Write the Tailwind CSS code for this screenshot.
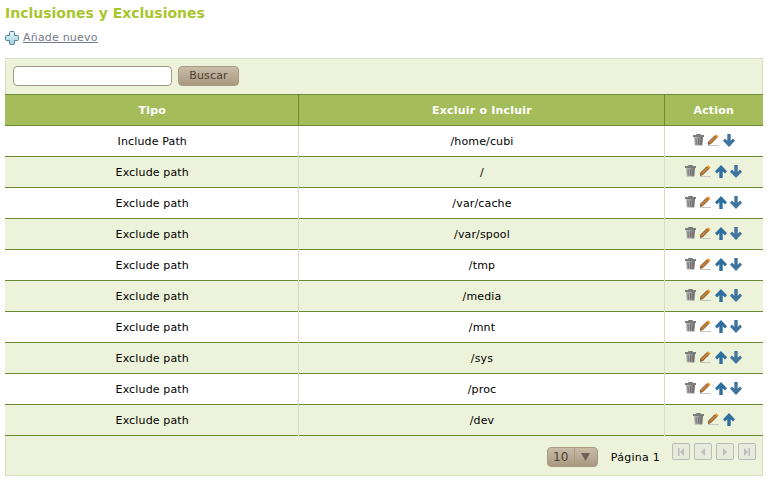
<!DOCTYPE html>
<html lang="en">
<head>
  <meta charset="UTF-8" />
  <title>Inclusiones y Exclusiones</title>
  <script src="https://cdn.jsdelivr.net/npm/@tailwindcss/browser@4"></script>
</head>
<body class="bg-white font-['DejaVu_Sans',sans-serif] text-[11px] tracking-[0.15px] text-black">
  <!-- Icon set -->
  <svg class="absolute w-0 h-0">
    <defs>
      <linearGradient id="can" x1="0" x2="1" y1="0" y2="0">
        <stop offset="0" stop-color="#b8b8b8"/>
        <stop offset=".5" stop-color="#9a9a9a"/>
        <stop offset="1" stop-color="#6c6c6c"/>
      </linearGradient>
      <linearGradient id="cross" x1="0" x2="0" y1="0" y2="1">
        <stop offset="0" stop-color="#e4f5f8"/>
        <stop offset="1" stop-color="#9fd0de"/>
      </linearGradient>
    </defs>
    <symbol id="trash" viewBox="0 0 11 12">
      <path d="M3.500 1V.5h4V1" fill="none" stroke="#777"/>
      <path d="M0 1h11v2H0z" fill="#7c7c7c"/>
      <path d="M1 3h9l-.7 8.500H1.700z" fill="url(#can)"/>
      <path d="M3 4.500l.3 6M5.500 4.500v6M8 4.500l-.3 6" stroke="#666" stroke-width=".8"/>
    </symbol>
    <symbol id="pencil" viewBox="0 0 11 12">
      <path d="M.8 7.700L6.800 1.700l2 2-6 6-2.600.7z" fill="#c47f38" stroke="#6b4320" stroke-width=".8"/>
      <path d="M7 1.500L8.300.2l2.300 2.300-1.300 1.300z" fill="#f8941a"/>
      <path d="M0 11.500h11" stroke="#c4c4c0"/>
    </symbol>
    <symbol id="up" viewBox="0 0 12 13">
      <path d="M6 0l6 6.200-2 2.400-2.300-2.300V13H4.300V6.300L2 8.600 0 6.200z" fill="#2f6f9f"/>
    </symbol>
    <symbol id="down" viewBox="0 0 12 13">
      <path d="M6 13L0 6.800l2-2.400 2.300 2.300V0h3.400v6.700L10 4.400l2 2.400z" fill="#3f749f"/>
    </symbol>
    <symbol id="plus" viewBox="0 0 14 14">
      <path d="M5.500 .5h3a1 1 0 0 1 1 1v3h3a1 1 0 0 1 1 1v3a1 1 0 0 1-1 1h-3v3a1 1 0 0 1-1 1h-3a1 1 0 0 1-1-1v-3h-3a1 1 0 0 1-1-1v-3a1 1 0 0 1 1-1h3v-3a1 1 0 0 1 1-1z" fill="url(#cross)" stroke="#4f8296"/>
    </symbol>
  </svg>

  <div class="pl-[5px] pr-[4px] pt-[4px]">
    <h1 class="text-[14px] leading-[18px] font-bold tracking-normal text-[#a9c52f]">Inclusiones y Exclusiones</h1>

    <div class="flex items-center gap-[4px] mt-[8px] h-[16px]">
      <svg class="w-[14px] h-[14px]"><use href="#plus"/></svg>
      <a href="#" class="underline tracking-[0.2px] text-[#777a8a]">Añade nuevo</a>
    </div>

    <!-- Panel -->
    <div class="mt-[12px] border border-[#d8dfbd] bg-[#edf3da]">
      <div class="flex items-start gap-[6px] h-[35px] pl-[7px] pt-[7px]">
        <input type="text" class="w-[159px] h-[20px] bg-white border border-[#a89a80] rounded-[4px]" />
        <button class="w-[61px] h-[20px] rounded-[4px] border border-[#a89a80] bg-gradient-to-b from-[#c9bda8] to-[#a89880] text-[#4a3f30]">Buscar</button>
      </div>

      <table class="w-[calc(100%+2px)] -mx-[1px] table-fixed border-collapse">
        <colgroup>
          <col class="w-[293px]" />
          <col class="w-[366px]" />
          <col />
        </colgroup>
        <thead>
          <tr class="h-[31px] bg-[#a5bc5b] text-white font-bold tracking-[0.2px] text-center border-y border-[#6a8a35]">
            <th class="pt-[2px] pl-[2px] border-r border-[#6a8a35]">Tipo</th>
            <th class="pt-[2px] pl-[2px] border-r border-[#6a8a35]">Excluir o Incluir</th>
            <th class="pt-[2px]">Action</th>
          </tr>
        </thead>
        <tbody class="text-center">
          <tr class="h-[31px] bg-white border-b border-[#6a8a35]">
            <td class="pt-[2px] pl-[2px] border-r border-[#d8dfbd]">Include Path</td>
            <td class="pt-[2px] pl-[2px] border-r border-[#d8dfbd]">/home/cubi</td>
            <td class="pb-[2px]"><div class="flex justify-center items-center gap-[3px]"><svg class="w-[11px] h-[12px]"><use href="#trash"/></svg><svg class="mx-[1px] w-[11px] h-[12px]"><use href="#pencil"/></svg><svg class="w-[12px] h-[13px]"><use href="#down"/></svg></div></td>
          </tr>
          <tr class="h-[31px] bg-[#edf3da] border-b border-[#6a8a35]">
            <td class="pt-[2px] pl-[2px] border-r border-[#d8dfbd]">Exclude path</td>
            <td class="pt-[2px] pl-[2px] border-r border-[#d8dfbd]">/</td>
            <td class="pb-[2px]"><div class="flex justify-center items-center gap-[3px]"><svg class="w-[11px] h-[12px]"><use href="#trash"/></svg><svg class="mx-[1px] w-[11px] h-[12px]"><use href="#pencil"/></svg><svg class="w-[12px] h-[13px]"><use href="#up"/></svg><svg class="w-[12px] h-[13px]"><use href="#down"/></svg></div></td>
          </tr>
          <tr class="h-[31px] bg-white border-b border-[#6a8a35]">
            <td class="pt-[2px] pl-[2px] border-r border-[#d8dfbd]">Exclude path</td>
            <td class="pt-[2px] pl-[2px] border-r border-[#d8dfbd]">/var/cache</td>
            <td class="pb-[2px]"><div class="flex justify-center items-center gap-[3px]"><svg class="w-[11px] h-[12px]"><use href="#trash"/></svg><svg class="mx-[1px] w-[11px] h-[12px]"><use href="#pencil"/></svg><svg class="w-[12px] h-[13px]"><use href="#up"/></svg><svg class="w-[12px] h-[13px]"><use href="#down"/></svg></div></td>
          </tr>
          <tr class="h-[31px] bg-[#edf3da] border-b border-[#6a8a35]">
            <td class="pt-[2px] pl-[2px] border-r border-[#d8dfbd]">Exclude path</td>
            <td class="pt-[2px] pl-[2px] border-r border-[#d8dfbd]">/var/spool</td>
            <td class="pb-[2px]"><div class="flex justify-center items-center gap-[3px]"><svg class="w-[11px] h-[12px]"><use href="#trash"/></svg><svg class="mx-[1px] w-[11px] h-[12px]"><use href="#pencil"/></svg><svg class="w-[12px] h-[13px]"><use href="#up"/></svg><svg class="w-[12px] h-[13px]"><use href="#down"/></svg></div></td>
          </tr>
          <tr class="h-[31px] bg-white border-b border-[#6a8a35]">
            <td class="pt-[2px] pl-[2px] border-r border-[#d8dfbd]">Exclude path</td>
            <td class="pt-[2px] pl-[2px] border-r border-[#d8dfbd]">/tmp</td>
            <td class="pb-[2px]"><div class="flex justify-center items-center gap-[3px]"><svg class="w-[11px] h-[12px]"><use href="#trash"/></svg><svg class="mx-[1px] w-[11px] h-[12px]"><use href="#pencil"/></svg><svg class="w-[12px] h-[13px]"><use href="#up"/></svg><svg class="w-[12px] h-[13px]"><use href="#down"/></svg></div></td>
          </tr>
          <tr class="h-[31px] bg-[#edf3da] border-b border-[#6a8a35]">
            <td class="pt-[2px] pl-[2px] border-r border-[#d8dfbd]">Exclude path</td>
            <td class="pt-[2px] pl-[2px] border-r border-[#d8dfbd]">/media</td>
            <td class="pb-[2px]"><div class="flex justify-center items-center gap-[3px]"><svg class="w-[11px] h-[12px]"><use href="#trash"/></svg><svg class="mx-[1px] w-[11px] h-[12px]"><use href="#pencil"/></svg><svg class="w-[12px] h-[13px]"><use href="#up"/></svg><svg class="w-[12px] h-[13px]"><use href="#down"/></svg></div></td>
          </tr>
          <tr class="h-[31px] bg-white border-b border-[#6a8a35]">
            <td class="pt-[2px] pl-[2px] border-r border-[#d8dfbd]">Exclude path</td>
            <td class="pt-[2px] pl-[2px] border-r border-[#d8dfbd]">/mnt</td>
            <td class="pb-[2px]"><div class="flex justify-center items-center gap-[3px]"><svg class="w-[11px] h-[12px]"><use href="#trash"/></svg><svg class="mx-[1px] w-[11px] h-[12px]"><use href="#pencil"/></svg><svg class="w-[12px] h-[13px]"><use href="#up"/></svg><svg class="w-[12px] h-[13px]"><use href="#down"/></svg></div></td>
          </tr>
          <tr class="h-[31px] bg-[#edf3da] border-b border-[#6a8a35]">
            <td class="pt-[2px] pl-[2px] border-r border-[#d8dfbd]">Exclude path</td>
            <td class="pt-[2px] pl-[2px] border-r border-[#d8dfbd]">/sys</td>
            <td class="pb-[2px]"><div class="flex justify-center items-center gap-[3px]"><svg class="w-[11px] h-[12px]"><use href="#trash"/></svg><svg class="mx-[1px] w-[11px] h-[12px]"><use href="#pencil"/></svg><svg class="w-[12px] h-[13px]"><use href="#up"/></svg><svg class="w-[12px] h-[13px]"><use href="#down"/></svg></div></td>
          </tr>
          <tr class="h-[31px] bg-white border-b border-[#6a8a35]">
            <td class="pt-[2px] pl-[2px] border-r border-[#d8dfbd]">Exclude path</td>
            <td class="pt-[2px] pl-[2px] border-r border-[#d8dfbd]">/proc</td>
            <td class="pb-[2px]"><div class="flex justify-center items-center gap-[3px]"><svg class="w-[11px] h-[12px]"><use href="#trash"/></svg><svg class="mx-[1px] w-[11px] h-[12px]"><use href="#pencil"/></svg><svg class="w-[12px] h-[13px]"><use href="#up"/></svg><svg class="w-[12px] h-[13px]"><use href="#down"/></svg></div></td>
          </tr>
          <tr class="h-[31px] bg-[#edf3da] border-b border-[#6a8a35]">
            <td class="pt-[2px] pl-[2px] border-r border-[#d8dfbd]">Exclude path</td>
            <td class="pt-[2px] pl-[2px] border-r border-[#d8dfbd]">/dev</td>
            <td class="pb-[2px]"><div class="flex justify-center items-center gap-[3px]"><svg class="w-[11px] h-[12px]"><use href="#trash"/></svg><svg class="mx-[1px] w-[11px] h-[12px]"><use href="#pencil"/></svg><svg class="w-[12px] h-[13px]"><use href="#up"/></svg></div></td>
          </tr>
        </tbody>
      </table>

      <!-- Pagination -->
      <div class="flex items-start justify-end h-[39px] pr-[6px]">
        <div class="flex mt-[11px] w-[51px] h-[20px] rounded-[4px] border border-[#a89a80] bg-gradient-to-b from-[#c9bda8] to-[#a89880] text-[#4a3f30]">
          <span class="flex-1 text-center text-[12px] leading-[18px] border-r border-[#a89a80]">10</span>
          <span class="w-[22px] flex items-center justify-center"><svg class="w-[9px] h-[8px]" viewBox="0 0 9 8"><path d="M0 0h9L4.500 8z" fill="#6b6255"/></svg></span>
        </div>
        <span class="mt-[14px] ml-[13px] mr-[12px] tracking-[0.25px]">Página 1</span>
        <div class="flex gap-[4px] mt-[7px]">
          <span class="flex items-center justify-center w-[18px] h-[17px] rounded-[2px] border border-[#bbb] bg-[#e8ebdc]"><svg class="w-[8px] h-[8px]" viewBox="0 0 8 8"><path d="M1 0h1.500v8H1zM7 0v8L3 4z" fill="#bdbdbd"/></svg></span>
          <span class="flex items-center justify-center w-[18px] h-[17px] rounded-[2px] border border-[#bbb] bg-[#e8ebdc]"><svg class="w-[8px] h-[8px]" viewBox="0 0 8 8"><path d="M6 0v8L2 4z" fill="#bdbdbd"/></svg></span>
          <span class="flex items-center justify-center w-[18px] h-[17px] rounded-[2px] border border-[#bbb] bg-[#e8ebdc]"><svg class="w-[8px] h-[8px]" viewBox="0 0 8 8"><path d="M2 0v8l4-4z" fill="#bdbdbd"/></svg></span>
          <span class="flex items-center justify-center w-[18px] h-[17px] rounded-[2px] border border-[#bbb] bg-[#e8ebdc]"><svg class="w-[8px] h-[8px]" viewBox="0 0 8 8"><path d="M1 0v8l4-4zM5.500 0H7v8H5.500z" fill="#bdbdbd"/></svg></span>
        </div>
      </div>
    </div>
  </div>
</body>
</html>
